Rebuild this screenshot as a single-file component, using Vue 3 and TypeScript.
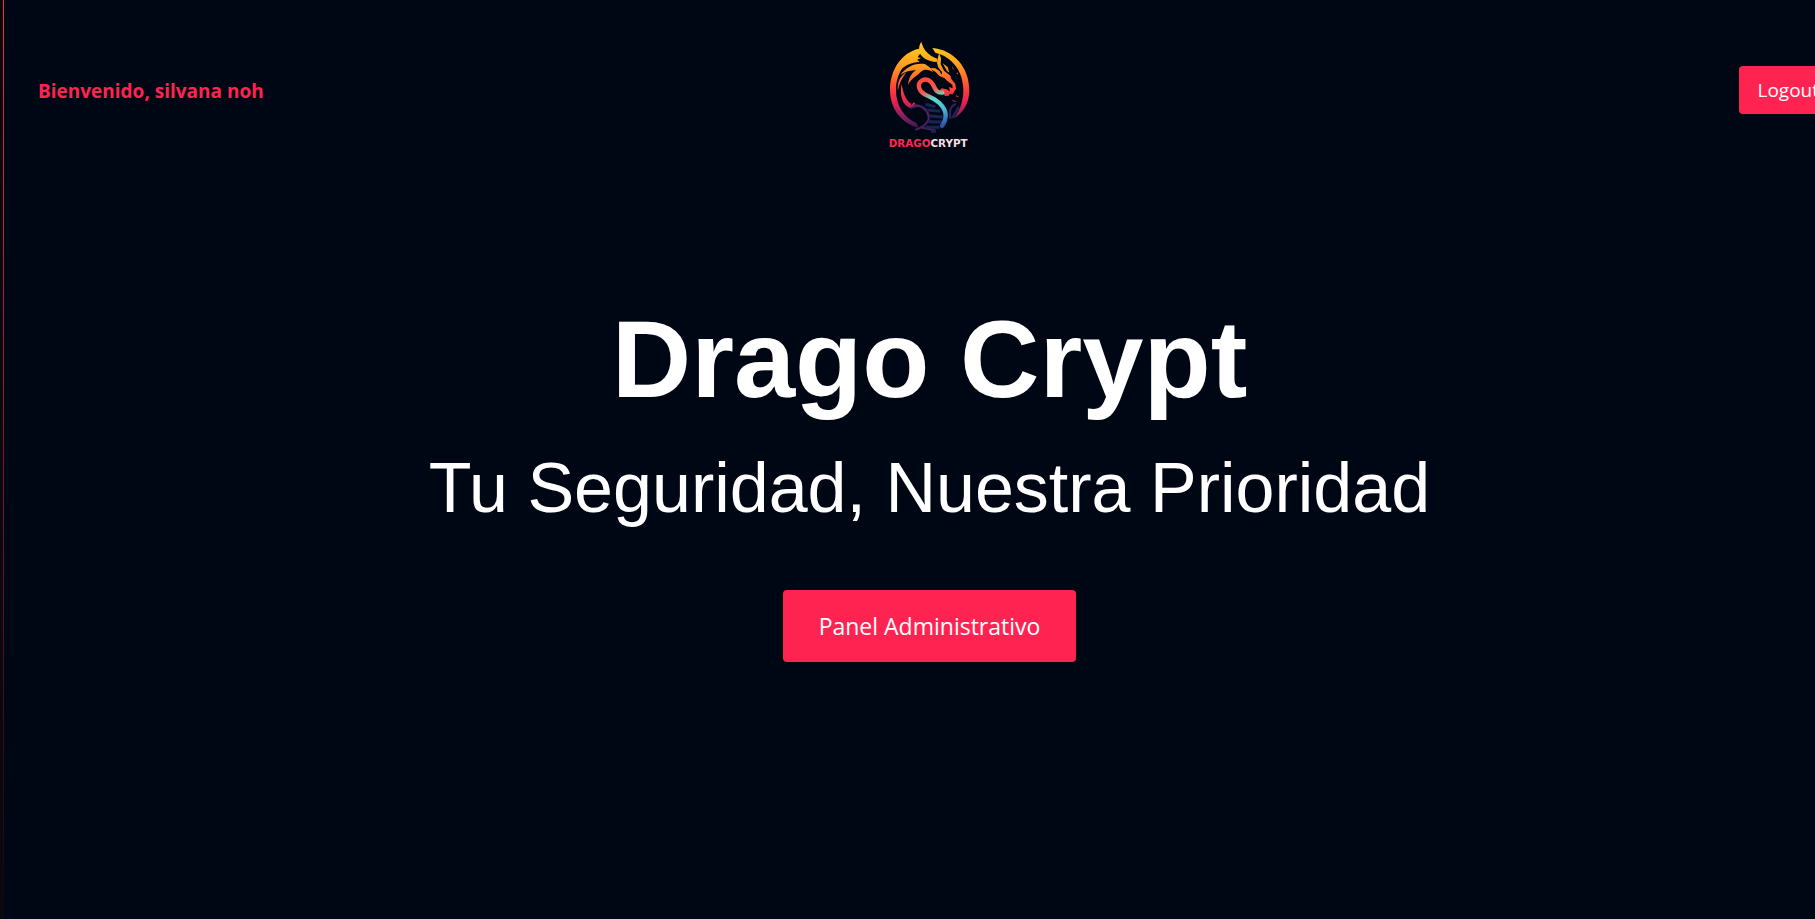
<script setup lang="ts">
const user: string = 'silvana noh'
</script>

<template>
  <div class="page">
    <div class="rail"></div>
    <div class="content">
      <header class="top">
        <p class="welcome">Bienvenido, {{ user }}</p>
        <svg class="logo" viewBox="0 0 300 360" role="img" aria-label="DragoCrypt">
          <defs>
            <linearGradient id="ring" gradientUnits="userSpaceOnUse" x1="0" y1="20" x2="0" y2="296">
              <stop offset="0" stop-color="#ffd21c" />
              <stop offset=".25" stop-color="#ffa01e" />
              <stop offset=".5" stop-color="#ff4438" />
              <stop offset=".66" stop-color="#e81e54" />
              <stop offset=".84" stop-color="#74205e" />
              <stop offset="1" stop-color="#141046" />
            </linearGradient>
            <linearGradient id="neck" gradientUnits="userSpaceOnUse" x1="140" y1="130" x2="195" y2="280">
              <stop offset="0" stop-color="#ff4a3c" />
              <stop offset=".22" stop-color="#f4584c" />
              <stop offset=".4" stop-color="#58e0cc" />
              <stop offset=".65" stop-color="#48bcd8" />
              <stop offset="1" stop-color="#2a3c9c" />
            </linearGradient>
          </defs>
          <g fill="url(#ring)">
            <path d="M117 41C66 52 30 103 30 165C30 222 67 268 116 278L109 264C72 248 48 212 48 165C48 116 76 72 122 57Z" />
            <path d="M157 39C222 44 268 99 268 165C268 203 251 233 222 250C241 224 250 198 250 165C250 110 217 65 166 53Z" />
            <path d="M124 20C129 43 145 61 173 72L170 81C143 79 124 68 118 50C116 38 118 29 124 20Z" />
            <path d="M177 54L183 70L182 88L192 107L211 122L214 132L226 147L228 161L218 178L208 177L207 182L195 183L188 173L179 168L184 160L199 163L210 169L207 156L218 160L217 149L201 137L193 129L178 123L166 110L146 99L166 100L178 108L185 119L186 111L174 96L171 82Z" />
            <path d="M119 58C90 62 68 80 55 111C76 88 94 84 119 80L111 74L123 69L113 67Z" />
            <path d="M134 87C101 83 78 98 61 120C83 106 92 107 108 106C92 116 86 131 84 151C94 128 110 125 122 111C135 100 148 105 160 112C151 97 142 91 134 87Z" />
            <path d="M79 112C58 125 51 145 54 168C59 142 66 130 79 112Z" />
            <path d="M65 147C58 183 68 211 91 219L94 207C78 197 69 174 65 147Z" />
            <path d="M88 218C105 219 111 205 101 202Z" />
            <path d="M188 85L201 108L208 113L203 96ZM216 93L222 104L219 103ZM231 112L235 118L230 117ZM228 181L237 184L230 187ZM217 195L234 201L218 199Z" />
          </g>
          <g fill="none" stroke-linecap="round">
            <path d="M95 218C116 206 137 216 145 237C151 258 134 276 108 284M103 211C131 209 148 235 146 256M122 277L164 286" stroke="#4b205d" stroke-width="6" />
            <path d="M136 208L166 215M139 225L181 229M148 243L189 246M145 260L188 261M137 277L178 277M153 289L168 289" stroke="#182554" stroke-width="9" stroke-linecap="butt" />
            <path d="M225 208C206 218 209 235 211 249M235 218L219 246" stroke="#29235d" stroke-width="7" />
            <path d="M187 173C163 175 166 153 153 141C136 124 111 139 118 160C125 183 153 180 178 204C204 229 200 253 186 273" stroke="url(#neck)" stroke-width="13" />
          </g>
          <text x="26" y="336" class="logo-name"><tspan fill="#ff2851">DRAGO</tspan><tspan fill="#f4dfe2">CRYPT</tspan></text>
        </svg>
        <div class="actions"><button class="btn logout" type="button">Logout</button></div>
      </header>
      <main class="hero">
        <h1>Drago Crypt</h1>
        <p class="tagline">Tu Seguridad, Nuestra Prioridad</p>
        <button class="btn panel" type="button">Panel Administrativo</button>
      </main>
    </div>
  </div>
</template>

<style>
body { background: #000714; }
</style>

<style scoped>
.page { display: flex; min-height: 100vh; overflow: hidden; background: #000714; color: #fff; font-family: "Segoe UI", "Open Sans", "Noto Sans", sans-serif; }
.rail { flex: 0 0 4px; box-sizing: border-box; background: #08080d; border-right: 1px solid; border-image: linear-gradient(#ff2351, #08080d) 1; }
.content { flex: 0 0 calc(100% + 36px); }
.top { display: grid; grid-template-columns: 1fr 100px 1fr; align-items: center; padding: 35px 0 0; }
.welcome { margin: 0; padding: 0 0 8px 34px; color: #ff2351; font-size: 19px; font-weight: 700; line-height: 28px; }
.logo { display: block; width: 100px; height: 120px; }
.logo-name { font: 700 31px "DejaVu Sans", sans-serif; }
.actions { padding: 0 18px 10px 0; text-align: right; }
.btn { border: 0; border-radius: 4px; background: #ff2351; color: #fff; font-family: inherit; cursor: pointer; }
.logout { padding: 10px 18px; font-size: 19px; line-height: 28px; }
.hero { display: flex; flex-direction: column; align-items: center; padding-top: 140px; }
h1 { margin: 0; font: 700 110px/128px "Liberation Sans", Arial, sans-serif; }
.tagline { margin: 25px 0 62px; font: 400 70px/80px "Liberation Sans", Arial, sans-serif; }
.panel { padding: 18px 36px; font-size: 23px; line-height: 36px; }
</style>
